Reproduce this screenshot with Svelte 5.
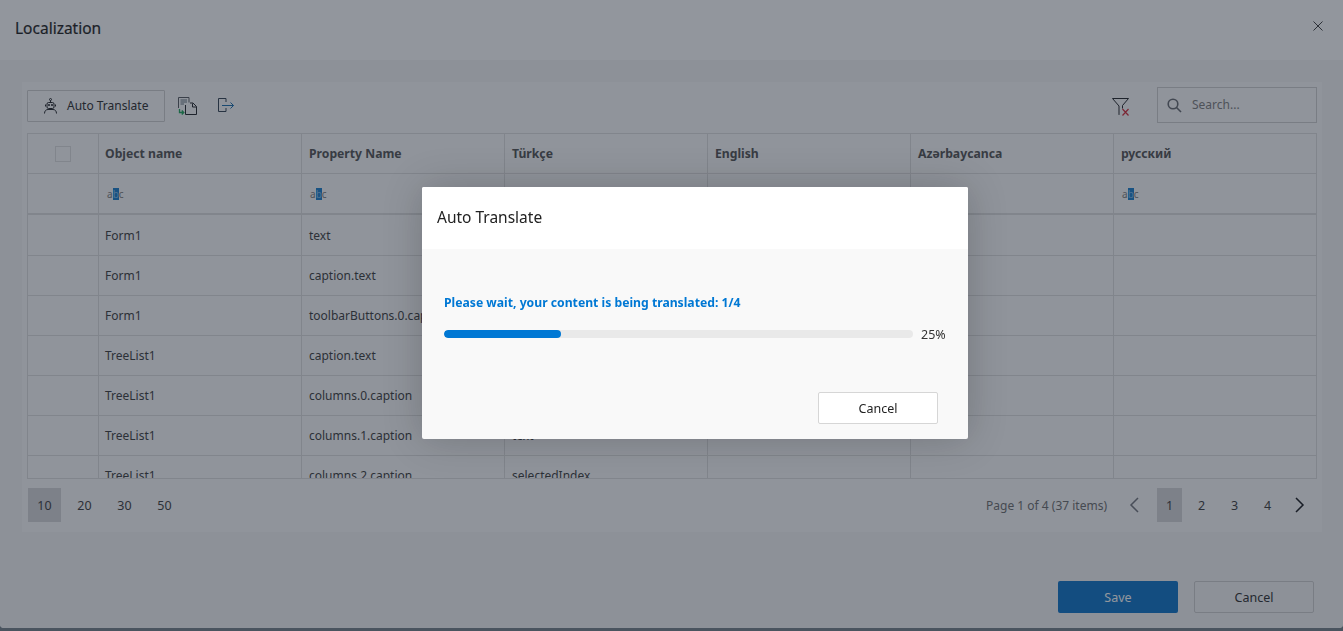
<script lang="ts">
	// Localization grid, with the Auto Translate progress dialog open on top of it.
	const columns = ['Object name', 'Property Name', 'Türkçe', 'English', 'Azərbaycanca', 'русский'];
	const rows = [
		['Form1', 'text', 'Form1'],
		['Form1', 'caption.text', 'Form1'],
		['Form1', 'toolbarButtons.0.caption', 'Add'],
		['TreeList1', 'caption.text', 'Tree'],
		['TreeList1', 'columns.0.caption', 'id'],
		['TreeList1', 'columns.1.caption', 'text'],
		['TreeList1', 'columns.2.caption', 'selectedIndex']
	];
	const pageSizes = [10, 20, 30, 50];
	const pages = [1, 2, 3, 4];
	let progress = 25;
</script>

{#snippet abc()}
	<span class="abc">a<b>b</b>c</span>
{/snippet}

<div class="window">
	<header class="title-bar">
		<h1>Localization</h1>
		<svg class="close" viewBox="0 0 10 10" width="10" height="10"><path d="M.5.5l9 9M9.500.5l-9 9" /></svg>
	</header>

	<main class="content">
		<section class="panel">
			<div class="toolbar">
				<button class="tool-btn">
					<svg viewBox="0 0 14 16" width="14" height="16" fill="none" stroke="#16181c" stroke-width="1">
						<circle cx="6.500" cy="1.500" r="1" />
						<path d="M6.500 2.500v1.500" />
						<rect x="3" y="4.500" width="7" height="6" rx="1.500" />
						<path d="M1.500 6.500v2M11.500 6.500v2" />
						<path d="M.5 15.500c0-2.500 1.500-4 3.500-4h5c2 0 3.500 1.500 3.500 4" />
						<circle cx="5" cy="7" r=".6" fill="#16181c" />
						<circle cx="8" cy="7" r=".6" fill="#16181c" />
					</svg>
					Auto Translate
				</button>
				<svg class="tool-icon" viewBox="0 0 19 18" width="19" height="18" fill="none">
					<path d="M.5 11V.5h10.500v5" stroke="#4e5258" />
					<path d="M2.500 3h6.500M2.500 5h6.500M2.500 7h3.500" stroke="#5d6a78" />
					<path d="M7.500 8v9.500h11V9.500L15 6h-3" stroke="#16181c" />
					<path d="M14.500 6.500v3.500h4" stroke="#16181c" />
					<path d="M1.500 12v3.500h4M3.800 13.500l2 2-2 2" stroke="#12a352" stroke-width="1.300" />
				</svg>
				<svg class="tool-icon export" viewBox="0 0 17 15" width="17" height="15" fill="none">
					<path d="M8 4V.5H.5v13H8V10" stroke="#283848" />
					<path d="M4 7.500h11.500M12.500 4.500l3 3-3 3" stroke="#0f66a8" />
				</svg>
				<svg class="filter" viewBox="0 0 18 18" width="18" height="18" fill="none">
					<path d="M.5.500h16l-6 7v3M.5.500l6.500 7.500v8.500" stroke="#16181c" />
					<path d="M7 16.500l.5.500" stroke="#16181c" />
					<path d="M10.500 11l6 6.500M16.500 11l-6 6.500" stroke="#d2202f" stroke-width="1.200" />
				</svg>
				<div class="search">
					<svg viewBox="0 0 15 15" width="15" height="15" fill="none" stroke="#5f6268" stroke-width="1.600">
						<circle cx="6" cy="6" r="4.800" />
						<path d="M9.500 9.500l4.500 4.500" />
					</svg>
					<span>Search...</span>
				</div>
			</div>

			<div class="grid">
				<div class="row head">
					<div class="cell check"><span class="checkbox"></span></div>
					{#each columns as col}
						<div class="cell">{col}</div>
					{/each}
				</div>
				<div class="row filters">
					<div class="cell check"></div>
					{#each columns as col}
						<div class="cell">{@render abc()}</div>
					{/each}
				</div>
				{#each rows as row}
					<div class="row">
						<div class="cell check"></div>
						<div class="cell">{row[0]}</div>
						<div class="cell">{row[1]}</div>
						<div class="cell">{row[2]}</div>
						<div class="cell"></div>
						<div class="cell"></div>
						<div class="cell"></div>
					</div>
				{/each}
			</div>

			<div class="pager">
				<div class="sizes">
					{#each pageSizes as size, i}
						<span class="size" class:active={i === 0}>{size}</span>
					{/each}
				</div>
				<div class="pages">
					<span class="info">Page 1 of 4 (37 items)</span>
					<svg class="chev" viewBox="0 0 10 16" width="10" height="16" fill="none" stroke="#6c6f76" stroke-width="1.500"><path d="M9 1L2 8l7 7" /></svg>
					{#each pages as page, i}
						<span class="page" class:active={i === 0}>{page}</span>
					{/each}
					<svg class="chev next" viewBox="0 0 10 16" width="10" height="16" fill="none" stroke="#0c0e12" stroke-width="1.500"><path d="M1 1l7 7-7 7" /></svg>
				</div>
			</div>
		</section>

		<footer class="actions">
			<button class="primary">Save</button>
			<button class="ghost">Cancel</button>
		</footer>
	</main>
</div>

<div class="overlay">
	<div class="dialog">
		<div class="dialog-head">Auto Translate</div>
		<div class="dialog-body">
			<p class="message">Please wait, your content is being translated: 1/4</p>
			<div class="progress">
				<div class="track"><div class="fill" style="width: {progress}%"></div></div>
				<span class="pct">{progress}%</span>
			</div>
			<div class="dialog-actions">
				<button class="cancel">Cancel</button>
			</div>
		</div>
	</div>
</div>

<style>
	:global(body) {
		font-family: 'Noto Sans', 'Open Sans', sans-serif;
		font-size: 12px;
		color: #333;
		overflow: hidden;
		background: #6f7b82;
	}
	.window {
		width: 1343px;
		height: 628px;
		display: flex;
		flex-direction: column;
		background: #fff;
		border-radius: 0 0 4px 4px;
		overflow: hidden;
	}
	.title-bar {
		height: 60px;
		flex: none;
		display: flex;
		align-items: center;
		justify-content: space-between;
		padding: 0 20px 4px 15px;
		box-sizing: border-box;
	}
	h1 {
		margin: 0;
		font-size: 15.5px;
		font-weight: 400;
		color: #111;
		-webkit-text-stroke: 0.2px #111;
	}
	.close {
		margin-top: -4px;
		fill: none;
		stroke: #333;
	}
	.content {
		flex: 1;
		background: #f4f4f4;
		padding: 22px 21px 0 22px;
		display: flex;
		flex-direction: column;
	}
	.panel {
		height: 450px;
		flex: none;
		background: #fafafa;
		padding: 0 5px;
		display: flex;
		flex-direction: column;
	}
	.toolbar {
		height: 51px;
		flex: none;
		display: flex;
		align-items: center;
	}
	button {
		font: inherit;
		box-sizing: border-box;
		cursor: pointer;
	}
	.tool-btn {
		width: 138px;
		height: 32px;
		margin-top: -4px;
		background: transparent;
		border: 1px solid #ccc;
		border-radius: 1px;
		color: #222;
		display: flex;
		align-items: center;
		gap: 9px;
		padding: 0 0 0 16px;
	}
	.tool-icon {
		margin: -4px 0 0 13px;
	}
	.tool-icon.export {
		margin-left: 21px;
	}
	.filter {
		margin: -1px 27px 0 auto;
	}
	.search {
		width: 160px;
		height: 36px;
		box-sizing: border-box;
		border: 1px solid #ccc;
		display: flex;
		align-items: center;
		gap: 10px;
		padding: 0 9px;
		margin-top: -5px;
		color: #777;
	}
	.search span {
		margin-top: -2px;
	}
	.grid {
		height: 346px;
		flex: none;
		box-sizing: border-box;
		border: 1px solid #ddd;
		overflow: hidden;
		background: #fafafa;
	}
	.row {
		display: grid;
		grid-template-columns: 71px repeat(5, 203px) 1fr;
		height: 40px;
		box-sizing: border-box;
		border-bottom: 1px solid #ddd;
	}
	.row.head {
		height: 40px;
		font-size: 12.2px;
		font-weight: 700;
	}
	.row.head .cell {
		color: #4a4a4a;
	}
	.row.filters {
		height: 41px;
		border-bottom-width: 2px;
	}
	.row.filters + .row {
		height: 41px;
	}
	.cell {
		display: flex;
		align-items: center;
		padding: 0 7px;
		border-right: 1px solid #ddd;
		white-space: nowrap;
		overflow: hidden;
		color: #333;
	}
	.cell.check + .cell {
		padding-left: 6px;
	}
	.cell:last-child {
		border-right: 0;
	}
	.cell.check {
		justify-content: center;
		padding: 0;
	}
	.checkbox {
		width: 16px;
		height: 16px;
		box-sizing: border-box;
		border: 1px solid #ddd;
	}
	.abc {
		display: flex;
		align-items: center;
		font-size: 10px;
		line-height: 12px;
		color: #777;
		margin-left: 1px;
	}
	.cell.check + .cell .abc {
		margin-left: 2px;
	}
	.abc b {
		display: block;
		width: 6px;
		height: 12px;
		text-align: center;
		font-weight: 400;
		background: #0c76c8;
		color: #7fbcea;
	}
	.pager {
		flex: 1;
		display: flex;
		align-items: center;
		justify-content: space-between;
		padding: 0 0 0 1px;
		margin-top: -1px;
		font-size: 12.5px;
	}
	.sizes,
	.pages {
		display: flex;
		align-items: center;
	}
	.size {
		width: 33px;
		height: 34px;
		margin-right: 7px;
		display: flex;
		align-items: center;
		justify-content: center;
	}
	.size.active,
	.page.active {
		background: #d4d4d6;
	}
	.pages {
		padding-right: 12px;
	}
	.info {
		font-size: 12px;
		color: #666;
		margin-right: 22px;
	}
	.page {
		width: 25px;
		height: 34px;
		margin-right: 8px;
		display: flex;
		align-items: center;
		justify-content: center;
	}
	.page.active {
		margin-right: 7px;
	}
	.chev {
		margin-right: 18px;
	}
	.chev.next {
		margin: 0 0 0 7px;
	}
	.actions {
		display: flex;
		justify-content: flex-end;
		gap: 16px;
		margin-top: 49px;
		padding-right: 8px;
	}
	.actions button {
		width: 120px;
		height: 32px;
		border-radius: 2px;
		font-size: 12.5px;
	}
	.primary {
		background: #006cc4;
		border: 0;
		color: #fff;
	}
	.ghost {
		background: transparent;
		border: 1px solid #ccc;
		color: #222;
	}
	.overlay {
		position: fixed;
		inset: 0;
		background: rgba(37, 45, 60, 0.5);
	}
	.dialog {
		position: absolute;
		left: 422px;
		top: 187px;
		width: 546px;
		height: 252px;
		background: #f9f9f9;
		border-radius: 2px;
		box-shadow: 0 0 40px rgba(0, 0, 0, 0.2);
		display: flex;
		flex-direction: column;
		overflow: hidden;
		font-size: 12.5px;
	}
	.dialog-head {
		height: 62px;
		flex: none;
		background: #fff;
		display: flex;
		align-items: center;
		padding: 0 0 2px 15px;
		box-sizing: border-box;
		font-size: 15.5px;
		color: #222;
	}
	.dialog-body {
		flex: 1;
		padding: 0 22px;
		display: flex;
		flex-direction: column;
	}
	.message {
		margin: 45px 0 0;
		font-size: 12.2px;
		font-weight: 700;
		color: #0078d4;
		line-height: 18px;
	}
	.progress {
		display: flex;
		align-items: flex-start;
		gap: 8px;
		margin-top: 13px;
	}
	.track {
		width: 469px;
		height: 8px;
		margin-top: 5px;
		border-radius: 4px;
		background: #e9e9e9;
		overflow: hidden;
	}
	.fill {
		height: 100%;
		background: #0078d4;
		border-radius: 4px;
	}
	.pct {
		margin-top: 1px;
		line-height: 18px;
		color: #333;
	}
	.dialog-actions {
		margin-top: auto;
		margin-right: 8px;
		margin-bottom: 15px;
		display: flex;
		justify-content: flex-end;
	}
	.cancel {
		width: 120px;
		height: 32px;
		background: #fff;
		border: 1px solid #d6d6d6;
		border-radius: 2px;
		color: #222;
	}
</style>
